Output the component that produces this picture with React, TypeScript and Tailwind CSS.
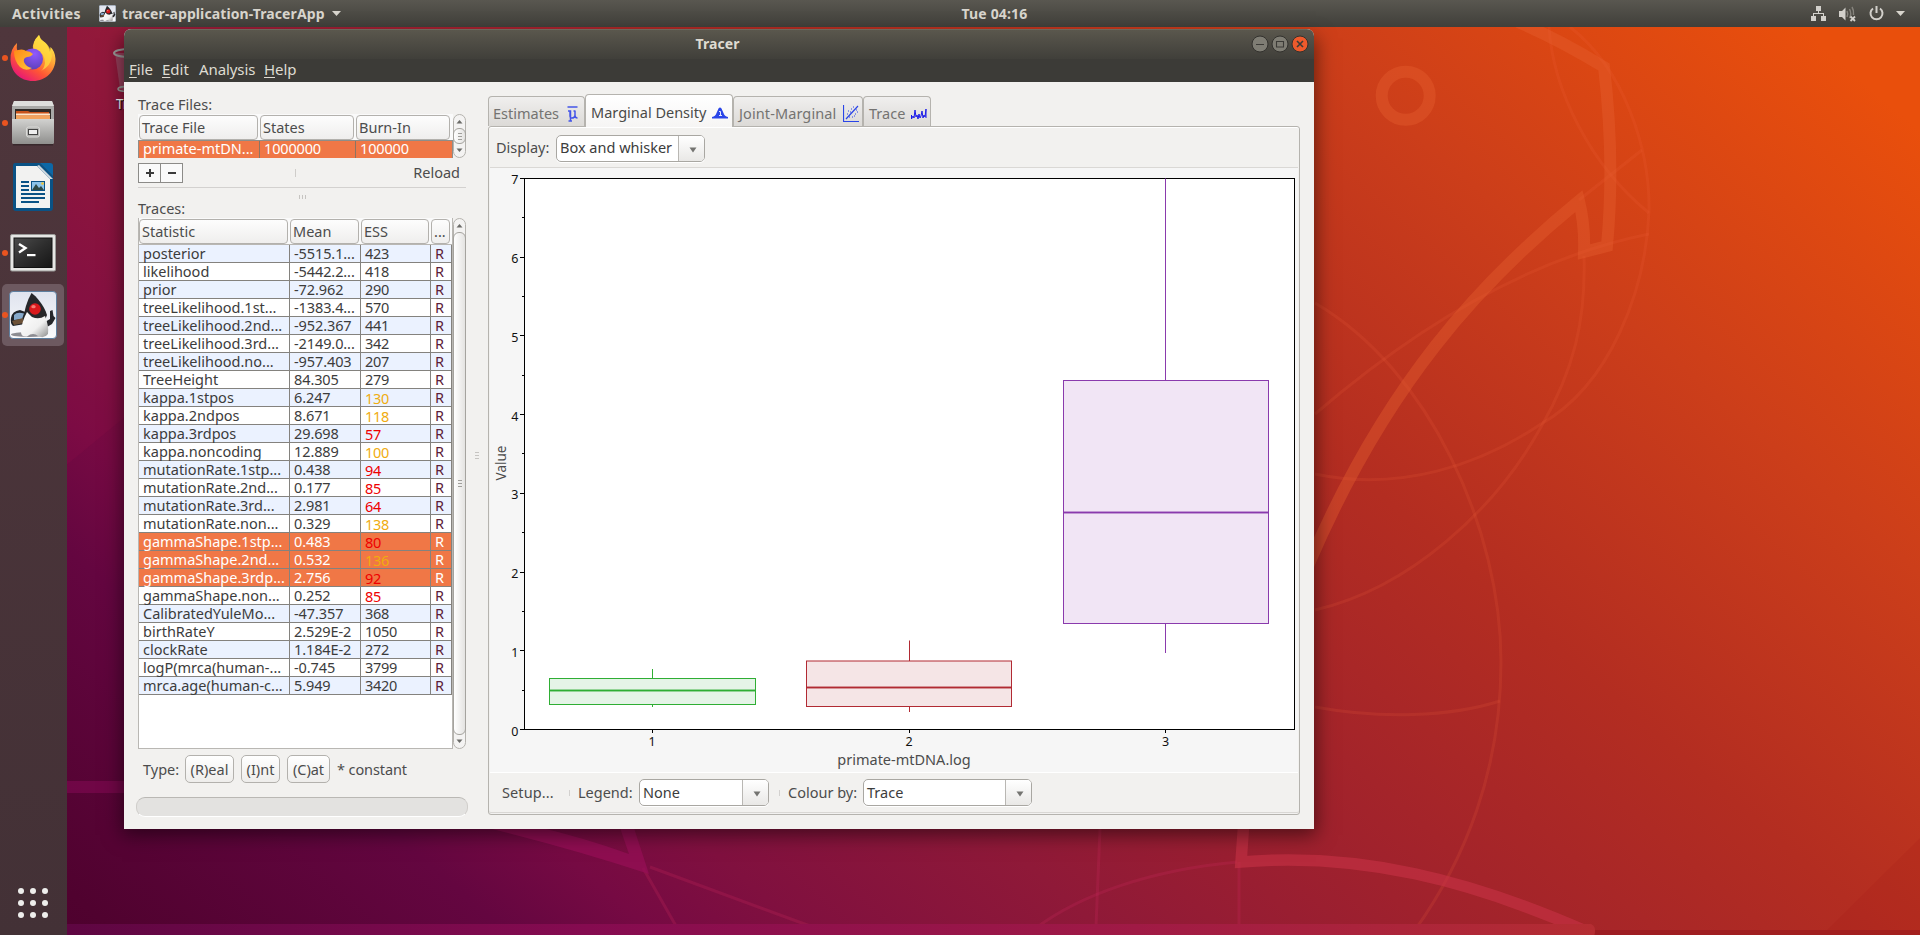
import React from "react";

type Row = [string, string, string, string?];

const rows: Row[] = [
  ["posterior", "-5515.1...", "423"],
  ["likelihood", "-5442.2...", "418"],
  ["prior", "-72.962", "290"],
  ["treeLikelihood.1st...", "-1383.4...", "570"],
  ["treeLikelihood.2nd...", "-952.367", "441"],
  ["treeLikelihood.3rd...", "-2149.0...", "342"],
  ["treeLikelihood.no...", "-957.403", "207"],
  ["TreeHeight", "84.305", "279"],
  ["kappa.1stpos", "6.247", "130", "warn"],
  ["kappa.2ndpos", "8.671", "118", "warn"],
  ["kappa.3rdpos", "29.698", "57", "bad"],
  ["kappa.noncoding", "12.889", "100", "warn"],
  ["mutationRate.1stp...", "0.438", "94", "bad"],
  ["mutationRate.2nd...", "0.177", "85", "bad"],
  ["mutationRate.3rd...", "2.981", "64", "bad"],
  ["mutationRate.non...", "0.329", "138", "warn"],
  ["gammaShape.1stp...", "0.483", "80", "bad"],
  ["gammaShape.2nd...", "0.532", "136", "warn"],
  ["gammaShape.3rdp...", "2.756", "92", "bad"],
  ["gammaShape.non...", "0.252", "85", "bad"],
  ["CalibratedYuleMo...", "-47.357", "368"],
  ["birthRateY", "2.529E-2", "1050"],
  ["clockRate", "1.184E-2", "272"],
  ["logP(mrca(human-...", "-0.745", "3799"],
  ["mrca.age(human-c...", "5.949", "3420"],
];

function Wallpaper() {
  return (
    <svg className="absolute inset-0" width="1920" height="935" viewBox="0 0 1920 935" fill="none">
      <defs>
        <linearGradient id="band" x1="67" y1="0" x2="1595" y2="0" gradientUnits="userSpaceOnUse">
          <stop offset="0" stopColor="#5e0642" />
          <stop offset="0.34" stopColor="#850b50" />
          <stop offset="0.7" stopColor="#a01a45" />
          <stop offset="1" stopColor="#b52d32" />
        </linearGradient>
      </defs>
      <path d="M67 27H600L67 464.5Z" fill="#a01850" fillOpacity="0.14" />
      <path d="M0 781H124V793H0Z" fill="#78084c" fillOpacity="0.75" />
      <g stroke="#f0643c" strokeOpacity="0.16" strokeWidth="3">
        <path d="M1549 27C1553 90 1590 165 1649 213" />
        <path d="M1570 27C1625 70 1650 150 1649 211C1646 290 1610 385 1541 424C1480 465 1400 492 1315 474" />
        <path d="M1642 150L1579 200" />
        <path d="M1649 234C1540 256 1430 315 1315 414" />
        <path d="M1584 256C1586 320 1574 370 1541 427C1495 510 1410 588 1315 610" />
        <path d="M1315 303C1430 370 1501 530 1501 662C1501 770 1465 860 1415 930" />
        <path d="M1315 707C1380 719 1450 717 1500 701" />
      </g>
      <g stroke="#c8285a" strokeOpacity="0.25" strokeWidth="3">
        <path d="M1239 862V930" />
        <path d="M1237 862C1150 870 1080 895 1036 928" />
        <path d="M1100 829L1096 926M643 868L676 926M650 867L810 926" />
      </g>
      <circle cx="1405.7" cy="95.7" r="24" stroke="#e6602f" strokeOpacity="0.4" strokeWidth="12" />
      <path
        d="M1518 22Q1560 40 1604 67Q1615 160 1607 246L1584 252Q1585 225 1579 201C1480 282 1385 385 1308 566"
        stroke="#e6602f" strokeOpacity="0.4" strokeWidth="12"
      />
      <path d="M1244 820L1241 862C1360 852 1470 880 1588 932" stroke="#c83246" strokeOpacity="0.6" strokeWidth="11.5" />
      <path d="M480 826Q570 848 649 874L632 822H618L629 854Q585 838 534 826Z" fill="#960f55" fillOpacity="0.75" />
      <path d="M67 924H1591Q1597 927 1594 935H67Z" fill="url(#band)" />
      <path d="M1595 930H1920V935H1595Z" fill="#96161e" fillOpacity="0.55" />
      <path d="M1920 838V930H1827Z" fill="#a01414" fillOpacity="0.12" />
    </svg>
  );
}

function Duke({ size }: { size: number }) {
  return (
    <svg width={size} height={size} viewBox="0 0 48 48">
      <defs>
        <linearGradient id="dukebg" x1="0" y1="0" x2="0" y2="1">
          <stop offset="0" stopColor="#dfe3ee" />
          <stop offset="1" stopColor="#fafafc" />
        </linearGradient>
        <linearGradient id="dukebody" x1="0" y1="0" x2="1" y2="1">
          <stop offset="0" stopColor="#ffffff" />
          <stop offset="0.6" stopColor="#f0f0f0" />
          <stop offset="1" stopColor="#8f8f8f" />
        </linearGradient>
      </defs>
      <rect x="0.5" y="0.5" width="47" height="47" rx="3.5" fill="url(#dukebg)" stroke="#5e7f9f" />
      <ellipse cx="20" cy="43.5" rx="18" ry="2.6" fill="#8c8c92" />
      <path d="M2 27Q3 20 11 19L19 22L16 33L4 35Q1 32 2 27Z" fill="#20242a" />
      <path d="M5 24Q8 20.500 15 22.500L13 28L5 29Z" fill="#86a9cb" />
      <path d="M3 30L14 27L15 32L5 34Z" fill="#6c5138" />
      <path d="M36 31L41 28L41 20L43.500 19L44.500 25L46.500 27L43 33L38 36Z" fill="#25262a" />
      <path d="M22.500 2C27 5 35 14 38 24L36 29L14 30Q16 13 22.500 2Z" fill="#26272a" />
      <path d="M18 21Q12.500 31 12 41Q12 46 18 45.500Q24 41 29 45Q35 48 39 43Q40 35 36 25Q30 29 23 26Z" fill="url(#dukebody)" />
      <circle cx="26" cy="18" r="5.800" fill="#d8191c" />
      <ellipse cx="24.500" cy="15.700" rx="2.200" ry="1.600" fill="#f57a72" />
    </svg>
  );
}

function Firefox() {
  return (
    <svg width="46" height="48" viewBox="0 0 46 48">
      <defs>
        <linearGradient id="ff1" x1="0.85" y1="0.1" x2="0.25" y2="1">
          <stop offset="0" stopColor="#fff44f" />
          <stop offset="0.35" stopColor="#ffa436" />
          <stop offset="0.65" stopColor="#ff5634" />
          <stop offset="1" stopColor="#e5127c" />
        </linearGradient>
        <radialGradient id="ff2" cx="0.6" cy="0.25" r="0.8">
          <stop offset="0" stopColor="#9059ff" />
          <stop offset="1" stopColor="#5b3fb8" />
        </radialGradient>
        <linearGradient id="ff3" x1="0" y1="0" x2="1" y2="1">
          <stop offset="0" stopColor="#ff8a16" />
          <stop offset="1" stopColor="#ffc53a" />
        </linearGradient>
      </defs>
      <path d="M29 1Q22 8 23 15L8 19Q6 14 7 9Q0 15 0.500 26C1 38 10 47 23 47C36 47 45.500 37 45.500 25Q45 17 40.500 13L40 18Q38 10 33 7Q30 5 29 1Z" fill="url(#ff1)" />
      <path d="M29 1Q22 8 24 15Q35 18 35 29Q34 35 31 37Q41 32 42 22Q41 12 33 7Q30 5 29 1Z" fill="#ffdc3e" fillOpacity="0.75" />
      <circle cx="22.500" cy="25" r="10.500" fill="url(#ff2)" />
      <path d="M4 17Q13 14 16 17Q20 17 23 20Q21 23 17 23Q13 24 14 28Q16 33 22 34Q16 38 10 33Q4 27 4 17Z" fill="url(#ff3)" />
    </svg>
  );
}

function FilesIcon() {
  return (
    <svg width="44" height="46" viewBox="0 0 44 46">
      <defs>
        <linearGradient id="fg" x1="0" y1="0" x2="0" y2="1">
          <stop offset="0" stopColor="#d2d2d0" />
          <stop offset="1" stopColor="#8f8f8d" />
        </linearGradient>
      </defs>
      <path d="M3 1H41L43 7V42Q43 44 41 44H3Q1 44 1 42V7Z" fill="#a9a9a7" />
      <path d="M3 1H41L43 6H1Z" fill="#dededc" />
      <rect x="4" y="9" width="36" height="11" fill="#2e2a27" />
      <path d="M5 11H17L19 12H38V20H5Z" fill="#c8521b" />
      <rect x="5" y="13.500" width="34" height="2" fill="#fbe6cc" />
      <rect x="5" y="15.500" width="34" height="4" fill="#f3a35d" />
      <path d="M1 19H43V42Q43 44 41 44H3Q1 44 1 42Z" fill="url(#fg)" />
      <rect x="15.500" y="27" width="13" height="10" rx="2" fill="#b4b4b2" stroke="#dadad8" />
      <rect x="17.500" y="29.500" width="9" height="5" fill="#eee" stroke="#444" />
      <rect x="2" y="44" width="40" height="1.500" fill="#2a1f22" fillOpacity="0.6" />
    </svg>
  );
}

function WriterIcon() {
  return (
    <svg width="42" height="50" viewBox="0 0 42 50">
      <path d="M3 1H28L41 14V46Q41 49 38 49H4Q1 49 1 46V4Q1 1 3 1Z" fill="#0a5285" />
      <path d="M28 1H38Q41 1 41 4V14Z" fill="#0d68a6" />
      <path d="M4 4H25L38 17V46H4Z" fill="#f2f2f1" />
      <path d="M25 4L38 17H41L27 3Z" fill="#cfd8de" />
      <g fill="#0a5285">
        <rect x="9" y="19" width="8" height="2" /><rect x="9" y="23" width="8" height="2" /><rect x="9" y="27" width="8" height="2" />
        <rect x="9" y="31" width="24" height="2" /><rect x="9" y="35" width="24" height="2" /><rect x="9" y="39" width="18" height="2" />
      </g>
      <rect x="19.500" y="19.500" width="13" height="9" fill="#8cc4ea" stroke="#0a5285" />
      <path d="M20 28L24 22L27 26L29 24L32 28Z" fill="#2f4a45" />
      <circle cx="30.500" cy="21.500" r="1.300" fill="#f4c430" />
    </svg>
  );
}

function TerminalIcon() {
  return (
    <svg width="46" height="38" viewBox="0 0 46 38">
      <defs>
        <linearGradient id="tg" x1="0" y1="0" x2="1" y2="1">
          <stop offset="0" stopColor="#4b4b4b" />
          <stop offset="0.5" stopColor="#2e2e2e" />
          <stop offset="1" stopColor="#161616" />
        </linearGradient>
      </defs>
      <rect x="0.500" y="0.500" width="45" height="36.500" rx="1.500" fill="#e6e6e4" stroke="#9b9b99" />
      <rect x="3.500" y="3.500" width="39" height="30.500" fill="#111" />
      <rect x="4.500" y="4.500" width="37" height="28.500" fill="url(#tg)" />
      <path d="M9 10L15.500 14L9 18.500" fill="none" stroke="#fff" strokeWidth="2.400" />
      <rect x="17" y="20" width="8.500" height="2.200" fill="#fff" />
    </svg>
  );
}

function DockItem({ children, dot, box }: { children: React.ReactNode; dot?: boolean; box: string }) {
  return (
    <div className={"flex w-full items-center " + box}>
      <div className={"mr-[2px] ml-[2px] size-[6px] shrink-0 rounded-full " + (dot ? "bg-[#e95420]" : "")} />
      <div className="flex w-[46px] justify-center">{children}</div>
    </div>
  );
}

function Caret({ cls }: { cls: string }) {
  return (
    <svg className={cls} width="9" height="5" viewBox="0 0 9 5">
      <path d="M0 0H9L4.500 5Z" fill="currentColor" />
    </svg>
  );
}

function ArrowBtn({ up }: { up?: boolean }) {
  return (
    <svg width="13" height="13" viewBox="0 0 13 13" className="shrink-0">
      <path d={up ? "M3.500 8.500H9.500L6.500 5Z" : "M3.500 4.500H9.500L6.500 8Z"} fill="#6a6a67" />
    </svg>
  );
}

function Scrollbar({ height, thumb }: { height: string; thumb: string }) {
  return (
    <div className={"flex w-[13px] shrink-0 flex-col items-center justify-between rounded-[7px] border border-[#b5b3ae] bg-[#f4f3f2] " + height}>
      <ArrowBtn up />
      <div className={"flex w-[13px] flex-col items-center justify-center gap-[2px] rounded-[6px] border border-[#a5a39e] bg-gradient-to-r from-white to-[#e4e3e1] " + thumb}>
        <div className="h-px w-[4px] bg-[#a09f9b]" />
        <div className="h-px w-[4px] bg-[#a09f9b]" />
        <div className="h-px w-[4px] bg-[#a09f9b]" />
      </div>
      <ArrowBtn />
    </div>
  );
}

function Th({ w, children }: { w: string; children: React.ReactNode }) {
  return (
    <div className={"flex h-[25px] shrink-0 items-center overflow-hidden rounded-[4px] border border-[#b3b1ad] bg-gradient-to-b from-[#fdfdfd] to-[#efeeed] pb-[2px] pl-[2px] leading-[20px] whitespace-nowrap " + w}>
      {children}
    </div>
  );
}

function Combo({ text, w, h }: { text: string; w: string; h: string }) {
  return (
    <div className={"flex items-stretch rounded-[5px] border border-[#a9a7a2] bg-white text-[#3c3c3c] shadow-[0_1px_0_#fff] " + w + " " + h}>
      <div className="flex flex-1 items-center pb-px pl-[3px] leading-none whitespace-nowrap">{text}</div>
      <div className="flex w-[26px] items-center justify-center rounded-r-[4px] border-l border-[#b9b7b3] bg-gradient-to-b from-white to-[#e9e8e6]">
        <svg width="8" height="6" viewBox="0 0 8 6" className="mt-[3px] ml-[3px]"><path d="M0.500 0.500H7.500L4 5.500Z" fill="#747471" /></svg>
      </div>
    </div>
  );
}

function Tab({ cls, children }: { cls: string; children: React.ReactNode }) {
  return (
    <div className={"flex shrink-0 items-center rounded-t-[4px] border border-b-0 border-[#b5b3ae] leading-none whitespace-nowrap " + cls}>
      {children}
    </div>
  );
}

function LeftPanel() {
  return (
    <div className="flex w-[344px] shrink-0 flex-col pt-[14px] pl-[14px]">
      <div className="h-[18px] leading-[17px]">Trace Files:</div>
      <div className="flex h-[44px] w-[329px]">
        <div className="flex w-[315px] flex-col bg-[#fafafa]">
          <div className="flex h-[26px] gap-[2px] pt-px pl-px">
            <Th w="w-[119px]">Trace File</Th>
            <Th w="w-[94px]">States</Th>
            <Th w="w-[94px]">Burn-In</Th>
          </div>
          <div className="flex h-[18px] border-t border-r border-l border-[#8f8d88] bg-[#f07746] leading-[15px] text-white">
            <div className="w-[121px] border-r border-[#8d7462] pl-[4px]">primate-mtDN...</div>
            <div className="w-[96px] border-r border-[#8d7462] pl-[4px] tracking-[-0.15px]">1000000</div>
            <div className="flex-1 pl-[4px] tracking-[-0.15px]">100000</div>
          </div>
        </div>
        <Scrollbar height="h-[44px]" thumb="h-[18px]" />
      </div>
      <div className="mt-[5px] flex h-[20px] w-[328px] items-center">
        <div className="flex h-[20px] w-[45px] border border-[#8c8b88] bg-[#fafafa] text-[#3c3c3c]">
          <div className="flex flex-1 items-center justify-center border-r border-[#8c8b88]">
            <svg width="8" height="8" viewBox="0 0 8 8"><path d="M0 4H8M4 0V8" stroke="#3c3c3c" strokeWidth="2" /></svg>
          </div>
          <div className="flex flex-1 items-center justify-center">
            <svg width="8" height="8" viewBox="0 0 8 8"><path d="M0 4H8" stroke="#3c3c3c" strokeWidth="2" /></svg>
          </div>
        </div>
        <div className="ml-[112px] h-[8px] w-px bg-[#cfcdca]" />
        <div className="mr-[6px] ml-auto pb-px leading-none">Reload</div>
      </div>
      <div className="mt-[4px] h-px w-[328px] bg-[#d3d1cf]" />
      <div className="mt-[7px] ml-[161px] flex h-[4px] gap-[2px]">
        <div className="w-px bg-[#c6c4c1]" /><div className="w-px bg-[#c6c4c1]" /><div className="w-px bg-[#c6c4c1]" />
      </div>
      <div className="mt-px h-[18px] leading-[17px]">Traces:</div>
      <div className="flex h-[531px] w-[329px]">
        <div className="flex w-[315px] flex-col border-r border-b border-l border-[#b9b7b3] bg-white">
          <div className="flex h-[27px] gap-[3px] border-b border-[#b9b7b3] bg-[#fafafa] pt-px">
            <Th w="w-[149px]">Statistic</Th>
            <Th w="w-[69px] -ml-px">Mean</Th>
            <Th w="w-[68px] -ml-px">ESS</Th>
            <Th w="w-[19px] -ml-px">...</Th>
          </div>
          {rows.map(([name, mean, ess, level], i) => {
            const sel = i >= 16 && i <= 18;
            const bg = sel ? "bg-[#f07746] text-white" : i % 2 === 0 ? "bg-[#ebf2ff]" : "bg-white";
            const col = level === "warn" ? "text-[#f0ac10] pt-px" : level === "bad" ? "text-[#ee0000] pt-px" : "";
            return (
              <div key={i} className={"flex h-[18px] shrink-0 border-b border-[#84827e] leading-[16px] whitespace-nowrap text-[#3c3c3c] " + bg}>
                <div className={"w-[151px] border-r border-[#84827e] pl-[4px]" + (sel ? " text-white" : "")}>{name}</div>
                <div className={"w-[71px] border-r border-[#84827e] pl-[4px] tracking-[-0.1px]" + (sel ? " text-white" : "")}>{mean}</div>
                <div className={"w-[70px] border-r border-[#84827e] pl-[4px] tracking-[-0.3px] " + col}>{ess}</div>
                <div className={"flex-1 border-r border-[#84827e] pl-[4px] " + (sel ? "text-white" : "text-[#5c2038]")}>R</div>
              </div>
            );
          })}
        </div>
        <Scrollbar height="h-[531px]" thumb="h-[504px]" />
      </div>
      <div className="mt-[6px] flex h-[28px] items-center pl-[5px] leading-none whitespace-nowrap">
        <div className="w-[42px]">Type:</div>
        {[["(R)eal", "w-[49px]"], ["(I)nt", "w-[39px]"], ["(C)at", "w-[43px]"]].map(([t, w]) => (
          <div key={t} className={"mr-[7px] flex h-[28px] items-center justify-center rounded-[5px] border border-[#b3b1ad] bg-gradient-to-b from-white to-[#eeedeb] " + w}>{t}</div>
        ))}
        <div className="tracking-[-0.1px]">* constant</div>
      </div>
      <div className="mt-[14px] -ml-[2px] h-[20px] w-[332px] rounded-[9px] border border-[#d0cecb] border-t-[#bab8b4] border-b-white bg-[#e3e2e0]" />
    </div>
  );
}

const yOf = (v: number) => 729.5 - v * 78.74;

const boxes = [
  { cx: 652.5, x1: 549.5, x2: 755.5, top: 678.5, bottom: 704.5, med: 690.5, hi: 669, lo: 707, stroke: "#2fae34", fill: "#e5f4e7" },
  { cx: 909.5, x1: 806.5, x2: 1011.5, top: 661, bottom: 706.5, med: 687.5, hi: 640.5, lo: 712, stroke: "#b12a33", fill: "#f5e5e6" },
  { cx: 1165.5, x1: 1063.5, x2: 1268.5, top: 380.5, bottom: 623.5, med: 512.5, hi: 178.5, lo: 653, stroke: "#8a3aad", fill: "#f1e5f5" },
];

function Chart() {
  return (
    <svg width="808" height="604" viewBox="490 168 808 604" className="block shrink-0 bg-[#f6f6f6]">
      <rect x="524.5" y="178.5" width="770" height="551" fill="#fff" stroke="#000" />
      <g stroke="#000">
        {[0, 1, 2, 3, 4, 5, 6, 7].map((v) => (
          <path key={v} d={`M520 ${Math.round(yOf(v) - 0.5) + 0.5}H524`} />
        ))}
        {[0.5, 1.5, 2.5, 3.5, 4.5, 5.5, 6.5].map((v) => (
          <path key={v} d={`M522 ${Math.round(yOf(v) - 0.5) + 0.5}H524`} />
        ))}
        <path d="M652.5 730V733M909.5 730V733M1165.5 730V733" />
      </g>
      <g fill="#111" fontSize="12.5" textAnchor="end">
        {[0, 1, 2, 3, 4, 5, 6, 7].map((v) => (
          <text key={v} x="518.5" y={yOf(v) + 6}>{v}</text>
        ))}
      </g>
      <g fill="#111" fontSize="12.5" textAnchor="middle">
        <text x="652" y="746">1</text>
        <text x="909" y="746">2</text>
        <text x="1165.5" y="746">3</text>
      </g>
      <text x="904" y="764.500" fontSize="14.5" fill="#4c4c4c" textAnchor="middle">primate-mtDNA.log</text>
      <text transform="translate(505.500 463) rotate(-90)" fontSize="13.5" fill="#4c4c4c" textAnchor="middle">Value</text>
      {boxes.map((b) => (
        <g key={b.cx} stroke={b.stroke}>
          <path d={`M${b.cx} ${b.hi}V${b.top}M${b.cx} ${b.bottom}V${b.lo}`} />
          <rect x={b.x1} y={b.top} width={b.x2 - b.x1} height={b.bottom - b.top} fill={b.fill} />
          <path d={`M${b.x1} ${b.med}H${b.x2}`} strokeWidth="3" strokeOpacity="0.45" />
          <path d={`M${b.x1} ${b.med}H${b.x2}`} />
        </g>
      ))}
    </svg>
  );
}

function RightPanel() {
  return (
    <div className="flex w-[812px] shrink-0 flex-col pt-[12px]">
      <div className="flex h-[32px] items-end text-[#747371]">
        <Tab cls="h-[30px] w-[97px] bg-gradient-to-b from-[#f0efee] to-[#dcdad7] pt-[4px] pl-[4px]">
          Estimates
          <svg className="mr-[6px] ml-auto" width="11" height="16" viewBox="0 0 11 16"><path d="M0.500 1H10.500M1 5H3.500V15.500M3 5V10Q3 12 5 12Q7.500 12 8 9.500V5M6.500 5H8.500M8 9.500Q8 12 10.500 12M1.500 15H5" fill="none" stroke="#4455e8" strokeWidth="1.500" /></svg>
        </Tab>
        <Tab cls="z-10 -mb-px h-[33px] w-[148px] bg-gradient-to-b from-white to-[#f6f5f4] pt-[2px] pl-[5px] text-[#4a4a48]">
          Marginal Density
          <svg className="mt-[2px] mr-[4px] ml-auto" width="16" height="12" viewBox="0 0 16 12"><path d="M0 10Q3.500 9.500 4.500 6L6.500 1.500Q8 -0.500 9.500 1.500L11.500 6Q12.500 9.500 16 10V11.500H0Z" fill="#2a45e8" /><path d="M7 4.500H8.500V8.500M7 8.500H10" stroke="#dfe6ff" fill="none" /></svg>
        </Tab>
        <Tab cls="h-[30px] w-[130px] bg-gradient-to-b from-[#f0efee] to-[#dcdad7] pt-[4px] pl-[5px] tracking-[0.1px]">
          Joint-Marginal
          <svg className="mr-[3px] ml-auto" width="16" height="17" viewBox="0 0 16 17"><path d="M0.500 0V16.500H16M3 14L15 1" fill="none" stroke="#2a45e8" strokeWidth="1.200" /><path d="M5 6h1M8 4h1M10 2h1M4 9h1M7 7h1M9 12h1M12 9h1M14 7h1M11 11h1M13 5h1M6 12h1" stroke="#2a45e8" /></svg>
        </Tab>
        <Tab cls="h-[30px] w-[68px] bg-gradient-to-b from-[#f0efee] to-[#dcdad7] pt-[4px] pl-[5px]">
          Trace
          <svg className="mt-[2px] mr-[3px] ml-auto" width="16" height="11" viewBox="0 0 16 11"><path d="M0.500 6V10L2 7L3 9L4 1L5 8L6 6L7 10L8 5L9 9L10 7L11 2L12 9L13 6L14 8L15 0V9" fill="none" stroke="#1c1ce8" strokeWidth="1" /></svg>
        </Tab>
      </div>
      <div className="flex h-[689px] w-[812px] flex-col rounded-[3px] border border-[#b5b3ae] px-px shadow-[inset_0_1px_0_#fff,inset_0_-1px_0_#f2f1f0,inset_0_-2px_0_#d9d7d4]">
        <div className="flex h-[41px] shrink-0 items-center border-b border-[#dad8d5] pt-[2px] pl-[6px] leading-none">
          <div className="w-[60px] pb-px">Display:</div>
          <Combo text="Box and whisker" w="w-[149px]" h="h-[27px]" />
        </div>
        <Chart />
        <div className="flex h-[41px] shrink-0 items-center border-t border-white pb-px pl-[12px] leading-none whitespace-nowrap">
          <div className="w-[67px] tracking-[0.1px]">Setup...</div>
          <div className="h-[6px] w-px bg-[#d3d1cf]" />
          <div className="ml-[8px] w-[61px]">Legend:</div>
          <Combo text="None" w="w-[130px]" h="h-[27px]" />
          <div className="ml-[10px] h-[6px] w-px bg-[#d3d1cf]" />
          <div className="ml-[8px] w-[75px]">Colour by:</div>
          <Combo text="Trace" w="w-[169px]" h="h-[27px]" />
        </div>
      </div>
    </div>
  );
}

function WinButton({ kind }: { kind: "min" | "max" | "close" }) {
  const close = kind === "close";
  return (
    <svg width="18" height="18" viewBox="0 0 18 18">
      <circle cx="9" cy="9" r="8" fill={close ? "#ee5a2c" : "#7f7d74"} stroke="#33322e" />
      <path d={kind === "min" ? "M5 9.500H13" : kind === "max" ? "M5.500 6.500H12.500V12H5.500Z" : "M6 6L12 12M12 6L6 12"} fill="none" stroke="#3c3b37" strokeWidth={close ? 1.600 : 1.100} />
    </svg>
  );
}

function TracerWindow() {
  return (
    <div className="absolute top-[29px] left-[124px] flex h-[800px] w-[1190px] flex-col overflow-hidden rounded-t-[7px] bg-[#f2f1ef] text-[#4c4c4c]">
      <div className="flex h-[30px] shrink-0 items-center border-t border-[#6b685d] bg-gradient-to-b from-[#5a574d] to-[#403f3a] pb-px">
        <div className="w-[60px]" />
        <div className="flex-1 pb-px text-center text-[14px] font-bold tracking-[0.1px] text-[#dfdbd2]">Tracer</div>
        <div className="flex gap-[2px] pr-[5px]">
          <WinButton kind="min" />
          <WinButton kind="max" />
          <WinButton kind="close" />
        </div>
      </div>
      <div className="flex h-[23px] shrink-0 items-center bg-[#3c3b37] pb-[2px] pl-[5px] text-[15px] leading-none text-[#dfdbd2]">
        <div className="w-[33px]"><span className="underline underline-offset-2">F</span>ile</div>
        <div className="w-[37px]"><span className="underline underline-offset-2">E</span>dit</div>
        <div className="w-[65px] tracking-[-0.1px]">Analysis</div>
        <div className="tracking-[-0.1px]"><span className="underline underline-offset-2">H</span>elp</div>
      </div>
      <div className="flex flex-1">
        <LeftPanel />
        <div className="flex w-[20px] shrink-0 flex-col items-start gap-[2px] pt-[370px] pl-[7px]">
          <div className="h-px w-[4px] bg-[#c6c4c1]" />
          <div className="h-px w-[4px] bg-[#c6c4c1]" />
          <div className="h-px w-[4px] bg-[#c6c4c1]" />
        </div>
        <RightPanel />
      </div>
    </div>
  );
}

function TopBar() {
  return (
    <div className="relative flex h-[27px] shrink-0 items-center justify-center bg-gradient-to-b from-[#595750] to-[#403f3a] text-[14px] font-bold text-[#d8d5cd]">
      <div className="pb-px pl-[69px] tracking-[0.15px]">Tue 04:16</div>
      <div className="absolute inset-y-0 left-[12px] flex items-center">
        <div className="w-[87px] tracking-[0.4px]">Activities</div>
        <Duke size={17} />
        <div className="ml-[6px] w-[204px] tracking-[0.1px] whitespace-nowrap">tracer-application-TracerApp</div>
        <Caret cls="ml-[6px]" />
      </div>
      <div className="absolute inset-y-0 right-[15px] flex items-center">
        <svg width="15" height="15" viewBox="0 0 15 15" fill="#d2d0cb"><path d="M5 0H10V5H8V7H13V10H15V15H10V10H12V8H3V10H5V15H0V10H2V7H7V5H5Z" /></svg>
        <svg className="ml-[13px]" width="17" height="16" viewBox="0 0 17 16"><path d="M0 5H3L6.500 1.500V14.500L3 11H0Z" fill="#d2d0cb" /><path d="M8 5Q9.500 8 8 11M10.500 3Q13 8 10.500 12M13 1Q15 4 14.500 9" stroke="#85837c" strokeWidth="1.500" fill="none" /><path d="M11.500 10.500L16 15M16 10.500L11.500 15" stroke="#d2d0cb" strokeWidth="1.800" /></svg>
        <svg className="ml-[13px]" width="15" height="15" viewBox="0 0 15 15" fill="none" stroke="#d2d0cb" strokeWidth="2"><path d="M4 2.500A6 6 0 1 0 11 2.500M7.500 0V7" /></svg>
        <Caret cls="ml-[12px]" />
      </div>
    </div>
  );
}

export default function App() {
  return (
    <div className="relative flex h-[935px] w-[1920px] flex-col overflow-hidden bg-[linear-gradient(41deg,#4c002d_0%,#50022f_4%,#640640_17%,#760a43_22%,#80103f_27%,#8f1938_37%,#9f212d_48%,#b32d21_63%,#cc3e1a_78%,#e94f0c_95%)] font-['Noto_Sans','Open_Sans',sans-serif] text-[14.5px]">
      <Wallpaper />
      <TopBar />
      <div className="relative flex flex-1">
        <div className="flex w-[67px] flex-col bg-gradient-to-b from-[#4f363c] to-[#433136]">
          <DockItem dot box="mt-[7px] h-[48px]"><Firefox /></DockItem>
          <DockItem dot box="mt-[18px] h-[46px]"><FilesIcon /></DockItem>
          <DockItem box="mt-[16px] h-[50px]"><WriterIcon /></DockItem>
          <DockItem dot box="mt-[22px] h-[38px]"><TerminalIcon /></DockItem>
          <div className="mt-[12px] ml-[2px] flex h-[62px] w-[62px] items-center rounded-[5px] bg-[#6d5960]">
            <div className="size-[6px] shrink-0 rounded-full bg-[#e95420]" />
            <div className="ml-px"><Duke size={48} /></div>
          </div>
          <div className="mt-auto mb-[17px] ml-[18px] grid w-[30px] grid-cols-3 gap-[6px]">
            {Array.from({ length: 9 }, (_, i) => (
              <div key={i} className="size-[6px] rounded-full bg-[#eeeeec]" />
            ))}
          </div>
        </div>
        <div className="w-[57px] overflow-hidden pt-[21px] pl-[46px] text-[13.5px] text-white">
          <svg width="30" height="44" viewBox="0 0 30 44" fill="none"><path d="M2 5L7 41Q14 44 22 41L28 5Z" fill="#9a5a70" fillOpacity="0.6" /><ellipse cx="15" cy="5" rx="14" ry="4" stroke="#9a9a98" strokeWidth="2" /><ellipse cx="14" cy="41" rx="9" ry="2.500" stroke="#9a9a98" strokeWidth="1.500" /></svg>
          <div className="pt-[2px] pl-[3px] [text-shadow:1px_1px_1px_#000]">Trash</div>
        </div>
      </div>
      <div className="absolute top-[36px] left-[124px] h-[793px] w-[1190px] shadow-[0_4px_18px_2px_rgba(0,0,0,0.5)]" />
      <TracerWindow />
    </div>
  );
}
